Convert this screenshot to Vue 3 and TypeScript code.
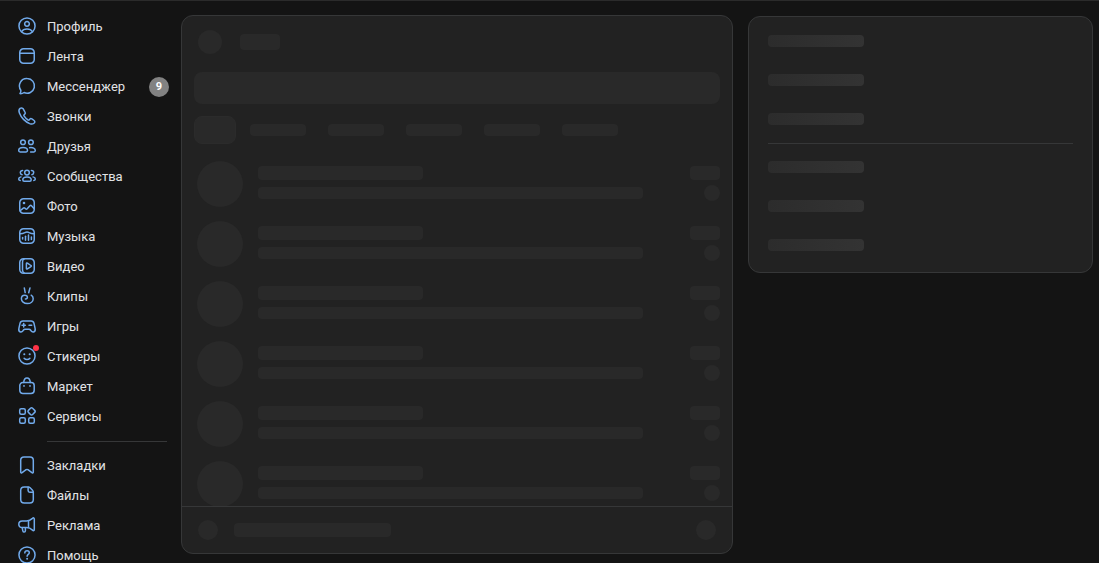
<script setup lang="ts">
interface NavItem {
  label: string
  icon: string[]
  dots?: [number, number, number][]
  badge?: number
  fresh?: boolean
}

const frame = 'M6.5 2.75h7a3.75 3.75 0 0 1 3.75 3.75v7a3.75 3.75 0 0 1-3.75 3.75h-7a3.75 3.75 0 0 1-3.75-3.75v-7A3.75 3.75 0 0 1 6.5 2.75z'
const ring = 'M10 1.95a8.05 8.05 0 1 1 0 16.1 8.05 8.05 0 0 1 0-16.1z'

const mainItems: NavItem[] = [
  {
    label: 'Профиль',
    icon: [ring, 'M10 5.5a2.35 2.35 0 1 1 0 4.7 2.35 2.35 0 0 1 0-4.7z', 'M4.6 15.6c1-1.7 3-2.6 5.4-2.6s4.4.9 5.4 2.6'],
  },
  { label: 'Лента', icon: [frame, 'M2.75 7.25h14.5'] },
  {
    label: 'Мессенджер',
    icon: ['M10.25 2.6a7.3 7.3 0 1 1-3.2 13.9c-1.1.8-2.6 1.3-4.1 1.1.8-1 1.1-2.1.9-3.4A7.3 7.3 0 0 1 10.25 2.6z'],
    badge: 9,
  },
  {
    label: 'Звонки',
    icon: ['M3.1 2.4c-1.3 1-1.4 2.8-.7 4.700.8 2.200 2.200 4.400 4.100 6.300s4 3.300 6.200 4.200c1.900.7 3.700.6 4.700-.7.6-.8.5-1.800-.3-2.400l-2.200-1.600c-.7-.5-1.500-.4-2 .2l-.6.8c-.3.4-.8.4-1.200.1-1.700-1.100-3-2.400-4.100-4.100-.3-.4-.2-.9.1-1.200l.7-.6c.6-.5.7-1.300.2-2L6.200 2.800c-.7-1-2.100-1.200-3.100-.4z'],
  },
  {
    label: 'Друзья',
    icon: [
      'M6 3.9a2.35 2.35 0 1 1 0 4.7 2.35 2.35 0 0 1 0-4.7z',
      'M13.9 3.9a2.35 2.35 0 1 1 0 4.7 2.35 2.35 0 0 1 0-4.7z',
      'M6.1 11.6c2.6 0 4.4 1.3 4.4 3 0 .9-.5 1.4-1.4 1.4h-6c-.9 0-1.4-.5-1.4-1.4 0-1.7 1.800-3 4.400-3z',
      'M12.6 11.7c3.3-.5 5.7.9 5.7 2.9 0 .9-.5 1.4-1.4 1.4h-3.3',
    ],
  },
  {
    label: 'Сообщества',
    icon: [
      'M10 4.2a2.35 2.35 0 1 1 0 4.7 2.35 2.35 0 0 1 0-4.7z',
      'M10 10.9c2.4 0 4.2 1.2 4.2 2.8 0 .9-.5 1.5-1.4 1.5H7.2c-.9 0-1.4-.6-1.4-1.5 0-1.600 1.800-2.800 4.200-2.800z',
      'M5.6 4.6c-1.4 0-2.3.8-2.3 2s.7 1.9 1.8 2.1',
      'M14.4 4.6c1.4 0 2.3.8 2.3 2s-.7 1.9-1.8 2.1',
      'M4 10.9c-1.5.4-2.3 1.200-2.3 2.200 0 .8.5 1.3 1.500 1.400',
      'M16 10.9c1.500.4 2.300 1.200 2.300 2.200 0 .8-.5 1.300-1.500 1.400',
    ],
  },
  {
    label: 'Фото',
    icon: [frame, 'M3.1 14.8l3.2-2.7c.5-.4 1-.4 1.5 0l1 .8c.5.4 1 .3 1.4-.1l2.700-3c.5-.5 1.100-.5 1.600 0l2.700 2.900'],
    dots: [[7, 7, 1.3]],
  },
  {
    label: 'Музыка',
    icon: [frame, 'M2.9 7.7c2 0 3.5-.3 5-1.1 1.500-.8 2.700-.8 4.200 0s3 1.100 5 1.100', 'M5.6 11.4v1.7', 'M8.5 10.2v4.1', 'M11.5 8.9v5.4', 'M14.4 10.9v2.6'],
  },
  {
    label: 'Видео',
    icon: [frame, 'M7.4 2.9c-1.300.4-1.900 1.400-1.900 3v8.200c0 1.600.6 2.600 1.900 3', 'M9.4 7.6v4.8c0 .6.5.8 1 .5l3.5-2.3c.5-.3.5-.8 0-1.1l-3.5-2.4c-.5-.3-1-.1-1 .5z'],
  },
  {
    label: 'Клипы',
    icon: ['M7.3 1.9l.9 4.700', 'M13 1.900l-1.300 4.900', 'M14.200 9.200c1.300.8 2 2 2 3.500 0 2.900-2.500 4.900-5.900 4.900s-5.900-2.100-5.900-4.900c0-2.200 1.300-3.500 3.300-3.500 1.600 0 2.700.8 2.700 2.100 0 1-.8 1.700-2 1.700'],
  },
  {
    label: 'Игры',
    icon: [
      'M5.9 5.1h8.2c1.5 0 2.5.8 2.9 2.3l1.1 5c.4 1.9-.2 3.3-1.6 3.6-1 .2-1.8-.2-2.4-1.1l-.6-.9c-.4-.6-.8-.8-1.5-.8H8c-.7 0-1.1.2-1.5.8l-.6.9c-.6.9-1.4 1.3-2.4 1.1-1.4-.3-2-1.7-1.6-3.6l1.100-5c.4-1.500 1.400-2.300 2.900-2.300z',
      'M6.7 7.5v3.4', 'M5 9.2h3.4', 'M12 9.2h2.7',
    ],
  },
  {
    label: 'Стикеры',
    icon: [ring, 'M7.1 12.2c1.5 1.7 4.3 1.7 5.8 0'],
    dots: [[7.3, 8.2, 1.05], [12.7, 8.2, 1.05]],
    fresh: true,
  },
  {
    label: 'Маркет',
    icon: ['M5.7 6.6h8.6c1.7 0 2.9 1.2 2.9 2.9v4.8c0 2-1.2 3.2-3.2 3.2H6c-2 0-3.2-1.2-3.2-3.2V9.5c0-1.7 1.2-2.9 2.9-2.9z', 'M6.7 6.5C6.9 3.7 8.1 2 10 2s3.1 1.7 3.3 4.5'],
    dots: [[7, 9.9, 0.9], [13, 9.9, 0.9]],
  },
  {
    label: 'Сервисы',
    icon: [
      'M4.2 2.75h2.6c.9 0 1.5.6 1.5 1.5v2.6c0 .9-.6 1.5-1.5 1.5H4.2c-.9 0-1.5-.6-1.5-1.5V4.25c0-.9.6-1.5 1.5-1.5z',
      'M4.2 11.7h2.6c.9 0 1.5.6 1.5 1.5v2.6c0 .9-.6 1.5-1.5 1.5H4.2c-.9 0-1.5-.6-1.5-1.5v-2.6c0-.9.6-1.5 1.5-1.5z',
      'M13.2 11.7h2.6c.9 0 1.5.6 1.5 1.5v2.6c0 .9-.6 1.5-1.5 1.5h-2.6c-.9 0-1.5-.6-1.5-1.5v-2.6c0-.9.6-1.5 1.5-1.5z',
      'M13.5 2.3l-2.1 2.1c-.7.7-.7 1.3 0 2l2.1 2.1c.7.7 1.4.7 2.1 0l2.1-2.1c.7-.7.7-1.3 0-2l-2.1-2.1c-.7-.7-1.4-.7-2.1 0z',
    ],
  },
]

const extraItems: NavItem[] = [
  { label: 'Закладки', icon: ['M7 2h6c2.1 0 3.3 1.2 3.3 3.3v11.6c0 .9-.7 1.3-1.4.8l-4-3c-.6-.4-1.2-.4-1.8 0l-4 3c-.7.5-1.4.1-1.4-.8V5.3C3.7 3.2 4.9 2 7 2z'] },
  { label: 'Файлы', icon: ['M7.2 2h3.9c.8 0 1.4.2 2 .8l2.4 2.5c.5.5.8 1.2.8 2v7.2c0 2.2-1.3 3.5-3.5 3.5H7.2c-2.2 0-3.5-1.3-3.5-3.5v-9C3.7 3.3 5 2 7.2 2z', 'M11.1 2.2v3.3c0 1.1.6 1.7 1.7 1.7h3.3'] },
  {
    label: 'Реклама',
    icon: [
      'M5.2 5.9h4.3c2.5 0 4.3-.9 6-2.5.9-.9 1.8-.6 1.8.7v10.3c0 1.3-.9 1.6-1.8.7-1.7-1.6-3.5-2.5-6-2.5H5.2c-2.1 0-3.4-1.3-3.4-3.3 0-2.1 1.3-3.4 3.4-3.4z',
      'M11.5 6v6.5', 'M5.2 12.8l.7 3.3c.2.7.6 1 1.2 1 .8 0 1.3-.5 1.3-1.3v-3',
    ],
  },
  {
    label: 'Помощь',
    icon: [ring, 'M7.8 7.9c.1-1.3 1-2.1 2.3-2.1s2.2.8 2.2 1.9c0 1.7-2.2 1.8-2.2 3.6'],
    dots: [[10.1, 13.8, 1]],
  },
]

const groups: NavItem[][] = [mainItems, extraItems]
</script>

<template>
  <div class="page">
    <nav class="sidebar" aria-label="Меню">
      <ul v-for="(group, g) in groups" :key="g" class="group">
        <li v-for="item in group" :key="item.label">
          <a href="#" class="item">
            <span class="icon">
              <svg viewBox="0 0 20 20" aria-hidden="true">
                <path v-for="(d, i) in item.icon" :key="i" :d="d" />
                <circle v-for="(c, i) in item.dots" :key="`c${i}`" :cx="c[0]" :cy="c[1]" :r="c[2]" />
              </svg>
              <i v-if="item.fresh" class="fresh"></i>
            </span>
            <span class="caption">
              <span class="label">{{ item.label }}</span>
              <span v-if="item.badge" class="badge">{{ item.badge }}</span>
            </span>
          </a>
        </li>
      </ul>
    </nav>

    <main class="panel chats" aria-busy="true">
      <div class="head">
        <span class="bone round head-avatar"></span>
        <span class="bone head-title"></span>
      </div>
      <div class="bone search"></div>
      <div class="tabs">
        <span class="bone tab-active"></span>
        <span v-for="n in 5" :key="n" class="bone tab"></span>
      </div>
      <div class="list">
        <div v-for="n in 6" :key="n" class="row">
          <span class="bone round avatar"></span>
          <div class="lines">
            <span class="bone name"></span>
            <span class="bone message"></span>
          </div>
          <div class="meta">
            <span class="bone time"></span>
            <span class="bone round status"></span>
          </div>
        </div>
      </div>
      <div class="foot">
        <span class="bone round foot-icon"></span>
        <span class="bone foot-text"></span>
        <span class="bone round foot-icon"></span>
      </div>
    </main>

    <aside class="panel filters" aria-busy="true">
      <div class="filter-group">
        <span v-for="n in 3" :key="n" class="filter"></span>
      </div>
      <div class="filter-group">
        <span v-for="n in 3" :key="n" class="filter"></span>
      </div>
    </aside>
  </div>
</template>

<style>
body {
  background: #141414;
}
</style>

<style scoped>
.page {
  box-sizing: border-box;
  display: grid;
  grid-template-columns: 166px minmax(0, 1.6fr) minmax(0, 1fr);
  grid-template-rows: minmax(0, 1fr);
  column-gap: 15px;
  height: 100vh;
  padding-right: 6px;
  overflow: hidden;
  border-top: 1px solid #2b2b2b;
  background: #141414;
  color: #e1e3e6;
  font-family: Roboto, "Noto Sans", sans-serif;
  font-size: 13px;
}

.sidebar {
  padding: 10px 0 0 17px;
}

.group {
  margin: 0;
  padding: 0;
  list-style: none;
}

.group + .group::before {
  content: "";
  display: block;
  height: 1px;
  margin: 10px -1px 8px 30px;
  background: #363738;
}

.item {
  display: flex;
  align-items: center;
  gap: 10px;
  height: 30px;
  margin-right: -3px;
  color: inherit;
  text-decoration: none;
}

.icon {
  position: relative;
  flex: none;
  width: 20px;
  height: 20px;
}

.icon svg {
  display: block;
  width: 20px;
  height: 20px;
}

.icon path {
  fill: none;
  stroke: #71aaeb;
  stroke-width: 1.5;
  stroke-linecap: round;
  stroke-linejoin: round;
}

.icon circle {
  fill: #71aaeb;
}

.fresh {
  position: absolute;
  top: -1px;
  right: -2px;
  width: 6px;
  height: 6px;
  border-radius: 50%;
  background: #ff3347;
}

.caption {
  flex: 1;
  display: flex;
  align-items: center;
  padding-top: 2px;
}

.label {
  flex: 1;
  line-height: 20px;
}

.badge {
  width: 20px;
  height: 20px;
  border-radius: 10px;
  background: #828282;
  color: #fff;
  font-size: 11px;
  font-weight: 700;
  line-height: 20px;
  text-align: center;
}

.panel {
  box-sizing: border-box;
  border: 1px solid #363738;
  border-radius: 12px;
  background: #222222;
}

.bone {
  display: block;
  flex: none;
  border-radius: 4px;
  background: #292929;
}

.round {
  border-radius: 50%;
}

.chats {
  display: flex;
  flex-direction: column;
  margin: 14px 0 9px;
  overflow: hidden;
}

.head {
  display: flex;
  align-items: center;
  gap: 18px;
  padding: 14px 16px 18px;
}

.head-avatar {
  width: 24px;
  height: 24px;
}

.head-title {
  width: 40px;
  height: 16px;
}

.search {
  height: 32px;
  margin: 0 12px;
  border-radius: 8px;
}

.tabs {
  display: flex;
  align-items: center;
  gap: 22px;
  padding: 12px 12px 10px;
}

.tab-active {
  box-sizing: border-box;
  width: 42px;
  height: 28px;
  margin-right: -8px;
  border: 1px solid #2b2b2b;
  border-radius: 8px;
}

.tab {
  width: 56px;
  height: 12px;
}

.list {
  flex: 1;
  min-height: 0;
  overflow: hidden;
}

.row {
  display: flex;
  align-items: center;
  gap: 15px;
  height: 60px;
  padding: 0 12px 0 15px;
}

.avatar {
  width: 46px;
  height: 46px;
}

.lines {
  flex: 1;
  min-width: 0;
  display: flex;
  flex-direction: column;
  gap: 7px;
  padding-bottom: 3px;
}

.name {
  width: 165px;
  max-width: 100%;
  height: 14px;
}

.message {
  width: 385px;
  max-width: 100%;
  height: 12px;
}

.meta {
  display: flex;
  flex-direction: column;
  align-items: flex-end;
  gap: 5px;
  padding-bottom: 1px;
}

.time {
  width: 30px;
  height: 14px;
}

.status {
  width: 16px;
  height: 16px;
}

.foot {
  display: flex;
  align-items: center;
  gap: 16px;
  height: 46px;
  padding: 0 16px;
  border-top: 1px solid #363738;
}

.foot-icon {
  width: 20px;
  height: 20px;
}

.foot-icon:last-child {
  margin-left: auto;
}

.foot-text {
  width: 157px;
  height: 14px;
}

.filters {
  align-self: start;
  margin-top: 15px;
  padding: 18px 19px 21px;
}

.filter-group {
  display: flex;
  flex-direction: column;
  gap: 27px;
}

.filter-group + .filter-group {
  margin-top: 18px;
  padding-top: 17px;
  border-top: 1px solid #363738;
}

.filter {
  width: 96px;
  height: 12px;
  border-radius: 4px;
  background: linear-gradient(90deg, #2c2c2c, #333333);
}
</style>
